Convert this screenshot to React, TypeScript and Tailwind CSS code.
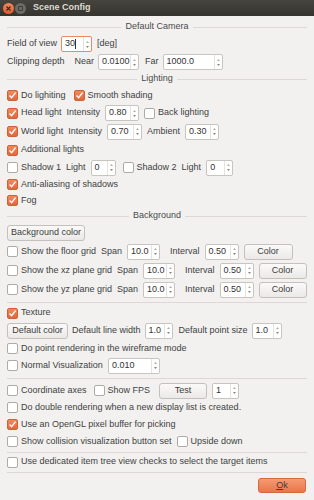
import React from "react";

function Check({ on }: { on?: boolean }) {
    return on ? (
        <span className="inline-flex items-center justify-center w-[11px] h-[11px] rounded-[2px] bg-gradient-to-b from-[#f08a5d] to-[#e2683a] border border-[#cf6234] shrink-0">
            <svg width="9" height="9" viewBox="0 0 9 9">
                <path d="M1.5 4.6 L3.6 6.8 L7.6 1.6" fill="none" stroke="#fff" strokeWidth="1.4" />
            </svg>
        </span>
    ) : (
        <span className="inline-block w-[11px] h-[11px] rounded-[2px] bg-white border border-[#aeaba6] shrink-0" />
    );
}

function CheckLabel({ on, label, className = "" }: { on?: boolean; label: string; className?: string }) {
    return (
        <span className={"inline-flex items-center gap-[3px] whitespace-nowrap " + className}>
            <Check on={on} />
            <span>{label}</span>
        </span>
    );
}

function Spin({ value, w, focus }: { value: string; w: string; focus?: boolean }) {
    return (
        <span
            className={
                "inline-flex items-stretch h-[16px] rounded-[2px] bg-white shrink-0 " +
                w +
                (focus ? " border border-[#e88b63]" : " border border-[#c8c4bf]")
            }
        >
            <span className="flex-1 flex items-center pl-[3px] text-[#333]">
                {value}
                {focus && <span className="inline-block w-px h-[10px] bg-[#333]" />}
            </span>
            <span className="w-[8px] border-l border-[#e6e3df] flex flex-col items-center justify-center gap-[3px]">
                <svg width="3" height="2" viewBox="0 0 3 2">
                    <path d="M0 2 L1.5 0 L3 2Z" fill="#b3afa9" />
                </svg>
                <svg width="3" height="2" viewBox="0 0 3 2">
                    <path d="M0 0 L1.5 2 L3 0Z" fill="#8a8680" />
                </svg>
            </span>
        </span>
    );
}

function Btn({ label, w, className = "" }: { label: string; w?: string; className?: string }) {
    return (
        <span
            className={
                "inline-flex items-center justify-center h-[16px] px-[6px] rounded-[3px] border border-[#c4c0bb] bg-gradient-to-b from-[#fbfaf9] to-[#ebe9e6] text-[#3c3c3c] whitespace-nowrap shrink-0 " +
                (w ?? "") +
                " " +
                className
            }
        >
            {label}
        </span>
    );
}

function Heading({ title, h }: { title: string; h: string }) {
    return (
        <div className={"flex items-center px-[7px] " + h}>
            <div className="flex-1 h-px bg-[#dcd9d5]" />
            <span className="px-[4px] text-[#4a4a4a]">{title}</span>
            <div className="flex-1 h-px bg-[#dcd9d5]" />
        </div>
    );
}

function Sep({ h }: { h: string }) {
    return (
        <div className={"flex items-center px-[7px] " + h}>
            <div className="flex-1 h-px bg-[#dcd9d5]" />
        </div>
    );
}

function Row({ h, children, gap = "gap-[5px]" }: { h: string; children: React.ReactNode; gap?: string }) {
    return <div className={"flex items-center px-[7px] whitespace-nowrap " + h + " " + gap}>{children}</div>;
}

export default function App() {
    return (
        <div
            className="w-[314px] h-[500px] bg-[#f2f1f0] text-[9px] text-[#3f3f3f] flex flex-col overflow-hidden"
            style={{ fontFamily: '"Liberation Sans", Arial, sans-serif' }}
        >
            {/* title bar */}
            <div className="h-[16px] shrink-0 flex items-center bg-gradient-to-b from-[#45443f] to-[#35342f] pl-[3px]">
                <span className="w-[11px] h-[11px] rounded-full bg-gradient-to-b from-[#f28a5c] to-[#e0592a] flex items-center justify-center">
                    <svg width="5" height="5" viewBox="0 0 5 5">
                        <path d="M0.5 0.5 L4.5 4.5 M4.5 0.5 L0.5 4.5" stroke="#3a2a22" strokeWidth="1.2" />
                    </svg>
                </span>
                <span className="ml-[1px] w-[11px] h-[11px] rounded-full bg-[#6b6a64] flex items-center justify-center">
                    <span className="w-[5px] h-[5px] rounded-[1px] border border-[#3d3c38]" />
                </span>
                <span className="ml-[7px] font-bold text-[#dfdbd2]">Scene Config</span>
            </div>

            <div className="h-[3px] shrink-0" />
            <Heading title="Default Camera" h="h-[16px]" />
            <Row h="h-[18px]" gap="gap-[4px]">
                <span>Field of view</span>
                <Spin value="30" w="w-[31px]" focus />
                <span className="ml-[1px]">[deg]</span>
            </Row>
            <Row h="h-[18px]" gap="gap-[4px]">
                <span>Clipping depth</span>
                <span className="ml-[6px]">Near</span>
                <Spin value="0.0100" w="w-[41px]" />
                <span className="ml-[2px]">Far</span>
                <Spin value="1000.0" w="w-[60px]" />
            </Row>
            <Heading title="Lighting" h="h-[16px]" />
            <Row h="h-[17px]" gap="gap-[8px]">
                <CheckLabel on label="Do lighiting" />
                <CheckLabel on label="Smooth shading" />
            </Row>
            <Row h="h-[18px]">
                <CheckLabel on label="Head light" />
                <span>Intensity</span>
                <Spin value="0.80" w="w-[34px]" />
                <CheckLabel label="Back lighting" />
            </Row>
            <Row h="h-[19px]">
                <CheckLabel on label="World light" />
                <span>Intensity</span>
                <Spin value="0.70" w="w-[35px]" />
                <span>Ambient</span>
                <Spin value="0.30" w="w-[34px]" />
            </Row>
            <Row h="h-[18px]">
                <CheckLabel on label="Additional lights" />
            </Row>
            <Row h="h-[17px]">
                <CheckLabel label="Shadow 1" />
                <span>Light</span>
                <Spin value="0" w="w-[25px]" />
                <CheckLabel label="Shadow 2" className="ml-[2px]" />
                <span>Light</span>
                <Spin value="0" w="w-[27px]" />
            </Row>
            <Row h="h-[17px]">
                <CheckLabel on label="Anti-aliasing of shadows" />
            </Row>
            <Row h="h-[15px]">
                <CheckLabel on label="Fog" />
            </Row>
            <Heading title="Background" h="h-[16px]" />
            <Row h="h-[18px]">
                <Btn label="Background color" w="w-[78px]" />
            </Row>
            <Row h="h-[19px]">
                <CheckLabel label="Show the floor grid" />
                <span>Span</span>
                <Spin value="10.0" w="w-[33px]" />
                <span className="ml-[5px]">Interval</span>
                <Spin value="0.50" w="w-[34px]" />
                <Btn label="Color" w="w-[49px]" />
            </Row>
            <Row h="h-[19px]">
                <CheckLabel label="Show the xz plane grid" />
                <span>Span</span>
                <Spin value="10.0" w="w-[32px]" />
                <span className="ml-[5px]">Interval</span>
                <Spin value="0.50" w="w-[34px]" />
                <Btn label="Color" w="w-[48px]" />
            </Row>
            <Row h="h-[19px]">
                <CheckLabel label="Show the yz plane grid" />
                <span>Span</span>
                <Spin value="10.0" w="w-[32px]" />
                <span className="ml-[5px]">Interval</span>
                <Spin value="0.50" w="w-[34px]" />
                <Btn label="Color" w="w-[48px]" />
            </Row>
            <Sep h="h-[6px]" />
            <Row h="h-[16px]">
                <CheckLabel on label="Texture" />
            </Row>
            <Row h="h-[19px]" gap="gap-[4px]">
                <Btn label="Default color" w="w-[61px]" />
                <span>Default line width</span>
                <Spin value="1.0" w="w-[28px]" />
                <span className="ml-[2px]">Default point size</span>
                <Spin value="1.0" w="w-[30px]" />
            </Row>
            <Row h="h-[17px]">
                <CheckLabel label="Do point rendering in the wireframe mode" />
            </Row>
            <Row h="h-[17px]">
                <CheckLabel label="Normal Visualization" />
                <Spin value="0.010" w="w-[52px]" />
            </Row>
            <Sep h="h-[8px]" />
            <Row h="h-[17px]">
                <CheckLabel label="Coordinate axes" />
                <CheckLabel label="Show FPS" className="ml-[2px]" />
                <Btn label="Test" w="w-[48px]" className="ml-[4px]" />
                <Spin value="1" w="w-[27px]" />
            </Row>
            <Row h="h-[17px]">
                <CheckLabel label="Do double rendering when a new display list is created." />
            </Row>
            <Row h="h-[17px]">
                <CheckLabel on label="Use an OpenGL pixel buffer for picking" />
            </Row>
            <Row h="h-[17px]">
                <CheckLabel label="Show collision visualization button set" />
                <CheckLabel label="Upside down" />
            </Row>
            <Sep h="h-[4px]" />
            <Row h="h-[16px]">
                <CheckLabel label="Use dedicated item tree view checks to select the target items" />
            </Row>
            <Sep h="h-[4px]" />
            <div className="flex justify-end px-[8px] pt-[4px]">
                <span className="inline-flex items-center justify-center w-[48px] h-[15px] rounded-[3px] border border-[#d4683f] bg-gradient-to-b from-[#f59a74] to-[#ea7449] text-[#3c3c3c]">
                    <span className="underline">O</span>k
                </span>
            </div>
        </div>
    );
}
